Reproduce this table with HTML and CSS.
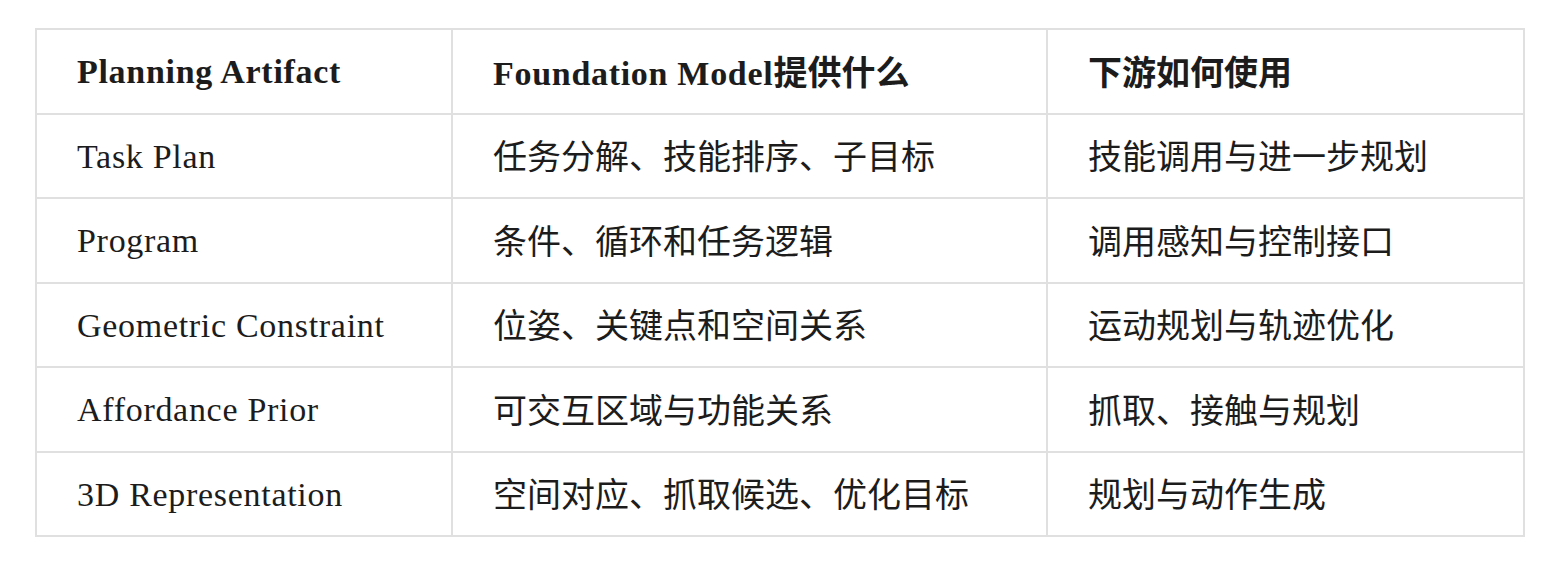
FILE: index.html
```html
<!DOCTYPE html>
<html lang="en">
<head>
<meta charset="utf-8">
<title>Planning Artifacts</title>
<link rel="stylesheet" href="styles.css">
</head>
<body>
<div class="page">
<table class="grid">
<colgroup>
<col class="c1"><col class="c2"><col class="c3">
</colgroup>
<thead>
<tr><th>Planning Artifact</th><th>Foundation Model<span class="zh" lang="zh">提供什么</span></th><th><span class="zh" lang="zh">下游如何使用</span></th></tr>
</thead>
<tbody>
<tr><td>Task Plan</td><td><span class="zh" lang="zh">任务分解、技能排序、子目标</span></td><td><span class="zh" lang="zh">技能调用与进一步规划</span></td></tr>
<tr><td>Program</td><td><span class="zh" lang="zh">条件、循环和任务逻辑</span></td><td><span class="zh" lang="zh">调用感知与控制接口</span></td></tr>
<tr><td>Geometric Constraint</td><td><span class="zh" lang="zh">位姿、关键点和空间关系</span></td><td><span class="zh" lang="zh">运动规划与轨迹优化</span></td></tr>
<tr><td>Affordance Prior</td><td><span class="zh" lang="zh">可交互区域与功能关系</span></td><td><span class="zh" lang="zh">抓取、接触与规划</span></td></tr>
<tr><td>3D Representation</td><td><span class="zh" lang="zh">空间对应、抓取候选、优化目标</span></td><td><span class="zh" lang="zh">规划与动作生成</span></td></tr>
</tbody>
</table>
</div>
</body>
</html>
```
FILE: styles.css
```css
html, body {
  margin: 0;
  padding: 0;
  background: #ffffff;
}
.page {
  padding: 28px 34px 0 35px;
}
.grid {
  width: 1488px;
  border-collapse: collapse;
  table-layout: fixed;
  font-family: "Liberation Serif", "Noto Sans CJK SC", serif;
  font-size: 34px;
  letter-spacing: 0.7px;
  color: #1c1c1c;
}
.c1 { width: 416px; }
.c2 { width: 595px; }
.c3 { width: 477px; }
.grid tr {
  height: 84.5px;
}
.grid th,
.grid td {
  border: 2px solid #e0e0e0;
  padding: 2px 40px 0 40px;
  line-height: 40px;
  text-align: left;
  vertical-align: middle;
  white-space: nowrap;
}
.grid th {
  font-weight: bold;
}
.zh {
  font-family: "Noto Sans CJK SC", sans-serif;
  letter-spacing: 0;
}
```
